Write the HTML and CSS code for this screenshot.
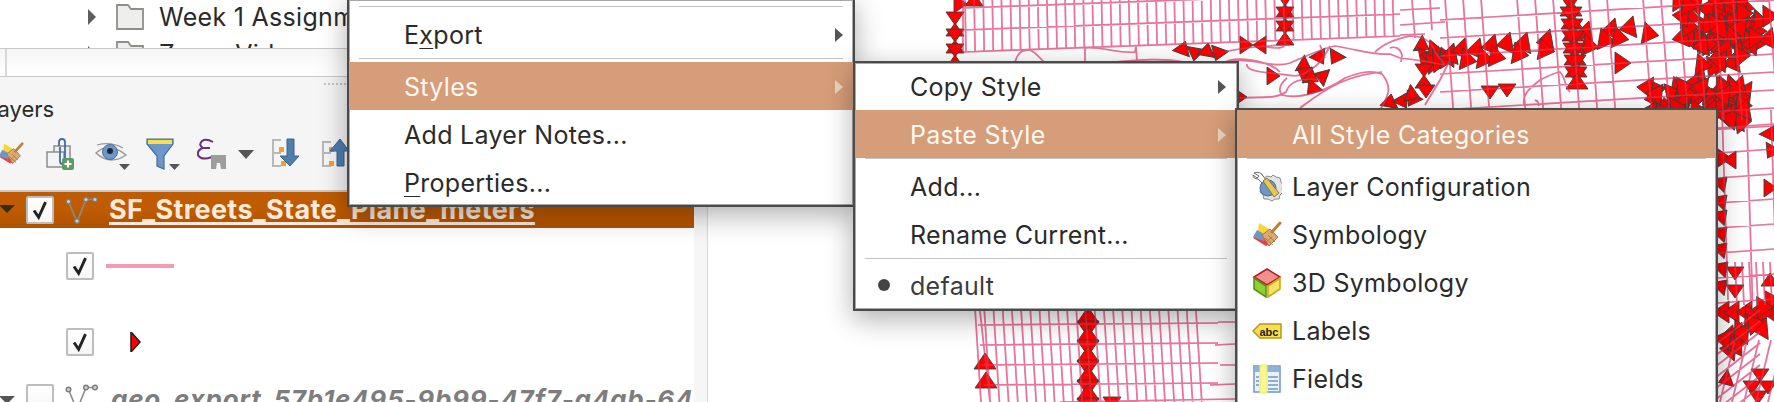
FILE: index.html
```html
<!DOCTYPE html>
<html lang="en">
<head>
<meta charset="utf-8">
<title>QGIS layer menu</title>
<link rel="stylesheet" href="styles.css">
</head>
<body>
<svg class="defs" width="0" height="0" aria-hidden="true">
  <symbol id="i-brush" viewBox="0 0 30 30">
    <path d="M1 18 8 12l10 12-4 2z" fill="#e8404a"/>
    <path d="M7 3l12 7-5 6-8-5z" fill="#f5d73c"/>
    <path d="M5 10l9 5-2 6-11-4z" fill="#6d97c9"/>
    <path d="M10 15l8-6 8 8-9 9z" fill="#dca873" stroke="#a9743f"/>
    <path d="M13 18l8 7M16 15l7 7M14 22l6-5" stroke="#a9743f" stroke-width=".8"/>
    <path d="M20 12l8-9" stroke="#bd7f38" stroke-width="3" stroke-linecap="round"/>
  </symbol>
  <symbol id="i-line" viewBox="0 0 34 28">
    <path d="M3.5 5.5 12 26 21 3.5h9" fill="none" stroke="#8c8c8c" stroke-width="1.6"/>
    <g fill="#cfcfcf" stroke="#7d7d7d" stroke-width="1.4">
      <circle cx="3.5" cy="5.500" r="2.300"/><circle cx="12" cy="25" r="2.300"/>
      <circle cx="21" cy="3.500" r="2.300"/><circle cx="30" cy="3.500" r="2.300"/>
    </g>
  </symbol>
  <symbol id="i-check" viewBox="0 0 24 24">
    <path d="M5.500 12.500 10.500 20 18 3.500" fill="none" stroke="#222" stroke-width="3.200"/>
  </symbol>
</svg>

<div class="app">
  <aside class="side">
    <div class="browser">
      <div class="browser-row">
        <span class="tree-arrow"></span>
        <svg class="folder" viewBox="0 0 28 26"><path d="M1 1h11l3 4h12v20H1z" fill="#eee" stroke="#8f8f8a" stroke-width="1.800"/></svg>
        <span class="browser-name">Week 1 Assignment</span>
      </div>
      <div class="browser-row">
        <span class="tree-arrow"></span>
        <svg class="folder" viewBox="0 0 28 26"><path d="M1 1h11l3 4h12v20H1z" fill="#eee" stroke="#8f8f8a" stroke-width="1.800"/></svg>
        <span class="browser-name">Zoom Videos</span>
      </div>
    </div>
    <div class="pathbar"><span class="pathbar-split"></span></div>
    <div class="layers-panel">
      <div class="grip"></div>
      <div class="layers-title">Layers</div>
      <div class="toolbar">
        <svg class="tool tool-brush"><use href="#i-brush"/></svg>
        <svg class="tool tool-add" viewBox="0 0 28 32">
          <path d="M8 8h16v17H8z" fill="#eee" stroke="#8d8d8d" stroke-width="1.500"/>
          <path d="M1 14h17v15H1z" fill="#f4f4f4" stroke="#8d8d8d" stroke-width="1.500"/>
          <path d="M13 8V4q0-3 3-3t3 3v19q0 3-2.500 3T14 23V9" fill="none" stroke="#3f6f9e" stroke-width="1.800"/>
          <rect x="16" y="20" width="12" height="12" rx="2" fill="#5c9a68"/>
          <path d="M22 22.500v7M18.500 26h7" stroke="#fff" stroke-width="2.200"/>
        </svg>
        <svg class="tool tool-eye" viewBox="0 0 36 32">
          <path d="M1 15Q14 3 31 17 15 28 1 15z" fill="#f2f2f2" stroke="#9a9a9a" stroke-width="1.500"/>
          <path d="M2 7q14-4 26 3" fill="none" stroke="#9a9a9a" stroke-width="1.200"/>
          <circle cx="15" cy="14" r="7.500" fill="#6d97c9" stroke="#4a6f9c"/>
          <circle cx="15" cy="13" r="3" fill="#1e2a3a"/>
          <path d="M24 26h11l-5.500 6z" fill="#555"/>
        </svg>
        <svg class="tool tool-filter" viewBox="0 0 36 32">
          <path d="M1 1h26v5l-9 12v13l-7-3V18L1 6z" fill="#6d97c9" stroke="#3f6f9e" stroke-width="1.200"/>
          <path d="M2 2h24v4H2z" fill="#f6e04b"/>
          <path d="M23 26h11l-5.500 6z" fill="#555"/>
        </svg>
        <svg class="tool tool-eps" viewBox="0 0 32 32">
          <path d="M16 4Q9 0 5 3 1 7 6 10q-6 2-5 7 3 6 14 2M6 10h7" fill="none" stroke="#6a2f7e" stroke-width="2"/>
          <path d="M14 17h15v14h-5l-1-6h-3l-1 6h-5z" fill="#9d9d9d"/>
        </svg>
        <span class="caret-down"></span>
        <svg class="tool tool-expand" viewBox="0 0 30 32">
          <path d="M2 2h9M3 2v27M3 15h8M2 28h9" stroke="#b8b8b8" stroke-width="2" fill="none"/>
          <path d="M9 9h5v5H9zM11 23h5v5h-5z" fill="#f6a21c"/>
          <path d="M17 1h7v17h5L20 28l-10-10h7z" fill="#4f7dac" stroke="#3a6390"/>
        </svg>
        <svg class="tool tool-collapse" viewBox="0 0 30 32">
          <path d="M2 4h9M3 4v25M3 15h8M2 28h9" stroke="#b8b8b8" stroke-width="2" fill="none"/>
          <path d="M9 9h5v5H9zM9 23h5v5H9z" fill="#f6a21c"/>
          <path d="M17 28h7V13h5L20 1 10 13h7z" fill="#4f7dac" stroke="#3a6390"/>
        </svg>
      </div>
    </div>
    <div class="layers-body">
      <div class="layer-tree">
        <div class="layer-row layer-row-selected">
          <span class="collapse"></span>
          <span class="check"><svg class="check-mark"><use href="#i-check"/></svg></span>
          <svg class="line-icon"><use href="#i-line"/></svg>
          <span class="layer-name">SF_Streets_State_Plane_meters</span>
        </div>
        <div class="legend-row">
          <span class="check"><svg class="check-mark"><use href="#i-check"/></svg></span>
          <span class="legend-line"></span>
        </div>
        <div class="legend-row">
          <span class="check"><svg class="check-mark"><use href="#i-check"/></svg></span>
          <svg class="legend-marker" viewBox="0 0 11 20"><path d="M1 0v20L10 10z" fill="#f00" stroke="#222" stroke-width="1.600"/></svg>
        </div>
        <div class="layer-row layer-row-off">
          <span class="collapse collapse-off"></span>
          <span class="check"></span>
          <svg class="line-icon"><use href="#i-line"/></svg>
          <span class="layer-name-off">geo_export_57b1e495-9b99-47f7-a4ab-64c9f0d1</span>
        </div>
      </div>
      <div class="scroll-track"></div>
    </div>
  </aside>
  <main class="map"><svg id="map" class="map-svg" viewBox="708 0 1066 402"></svg></main>

  <nav class="menu menu-layer">
    <div class="sep"></div>
    <div class="item">E<u>x</u>port<span class="arrow"></span></div>
    <div class="sep"></div>
    <div class="item item-on">Styles<span class="arrow"></span></div>
    <div class="item">Add Layer Notes...</div>
    <div class="item"><u>P</u>roperties...</div>
  </nav>

  <nav class="menu menu-styles">
    <div class="item">Copy Style<span class="arrow"></span></div>
    <div class="item item-on">Paste Style<span class="arrow"></span></div>
    <div class="sep"></div>
    <div class="item">Add...</div>
    <div class="item">Rename Current...</div>
    <div class="sep"></div>
    <div class="item item-current"><span class="bullet"></span>default</div>
  </nav>

  <nav class="menu menu-cats">
    <div class="item item-on">All Style Categories</div>
    <div class="sep"></div>
    <div class="item">
      <svg class="cat-icon" viewBox="0 0 30 30">
        <path d="M12 6l3-2 4 1 2-2 3 2 4 1 1 4 2 3-1 4 1 3-3 3-1 4-4 0-3 2-4-2-4 0-1-4-3-3 1-4z" fill="#e4e4e4" stroke="#8a8a8a"/>
        <circle cx="16" cy="16" r="8" fill="#6d97c9" stroke="#4a6f9c"/>
        <path d="M2 1Q9-1 11 4l3 4-4 3-4-4Q1 7 1 3l4 3 2-2z" fill="#fff" stroke="#666"/>
        <path d="M11 9l4-3 12 15-5 4z" fill="#e8c65a" stroke="#8a7430"/>
      </svg>Layer Configuration</div>
    <div class="item"><svg class="cat-icon"><use href="#i-brush"/></svg>Symbology</div>
    <div class="item">
      <svg class="cat-icon" viewBox="0 0 30 30">
        <path d="M15 1l13 8-13 8L2 9z" fill="#f58f8f" stroke="#b0202a" stroke-width="1.600"/>
        <path d="M2 10l12 8v11L2 21z" fill="#8fd12f" stroke="#5c8f1a" stroke-width="1.600"/>
        <path d="M28 10l-12 8v11l12-8z" fill="#f8e264" stroke="#c9a818" stroke-width="1.600"/>
      </svg>3D Symbology</div>
    <div class="item">
      <svg class="cat-icon" viewBox="0 0 30 30">
        <path d="M1 15l7-7h21v14H8z" fill="#f7df4e" stroke="#b79a12" stroke-width="1.500"/>
        <text class="abc" x="7.500" y="19.500">abc</text>
      </svg>Labels</div>
    <div class="item">
      <svg class="cat-icon" viewBox="0 0 30 30">
        <rect x="2" y="2" width="26" height="26" fill="#eaf2fb" stroke="#6d97c9" stroke-width="1.500"/>
        <path d="M3 3h24v5H3z" fill="#8fb2dc"/>
        <path d="M16 13h10M16 17h10M16 21h10M16 25h10M4 13h3M4 17h3M4 21h3" stroke="#6d97c9" stroke-width="1.300"/>
        <rect x="8" y="1" width="7" height="28" fill="#f8f59a" stroke="#eeee55"/>
      </svg>Fields</div>
  </nav>
</div>
<script src="map.js"></script>
</body>
</html>
```

FILE: styles.css
```css
* { box-sizing: border-box; }
html, body { margin: 0; padding: 0; background: #fff; }
body { font-family: Inter, "Noto Sans", "Liberation Sans", sans-serif; color: #2a2a2a; overflow: hidden; }
.defs { position: absolute; }
.app { position: relative; width: 1774px; height: 402px; overflow: hidden; display: grid; grid-template-columns: 708px 1fr; }

.side { display: flex; flex-direction: column; height: 402px; min-width: 0; overflow: hidden; }
.browser { height: 48px; overflow: hidden; background: #fff; }
.browser-row { height: 37px; display: flex; align-items: center; padding-left: 88px; position: relative; top: -2px; }
.tree-arrow { width: 0; height: 0; border-left: 8px solid #5e5e5e; border-top: 8px solid transparent; border-bottom: 8px solid transparent; }
.folder { width: 28px; height: 26px; margin-left: 20px; }
.browser-name { margin-left: 15px; font-size: 25px; letter-spacing: .3px; white-space: nowrap; }
.pathbar { height: 29px; border-top: 1px solid #c9c9c9; border-bottom: 1px solid #c9c9c9; background: linear-gradient(#f6f6f6, #fff); padding-left: 5px; }
.pathbar-split { display: block; width: 2px; height: 100%; background: #d8d8d8; }
.layers-panel { height: 115px; background: #f5f5f5; border-bottom: 2px solid #c8c8c8; overflow: hidden; }
.grip { width: 22px; margin: 6px 0 0 324px; border-top: 2px dotted #c4c4c4; height: 2px; }
.layers-title { margin: 10px 0 0 -15px; font-size: 22px; line-height: 28px; }
.toolbar { display: flex; align-items: flex-start; margin-top: 15px; }
.tool { display: block; height: 32px; flex: none; }
.tool-brush { width: 26px; margin-left: -2px; }
.tool-add { width: 28px; margin-left: 22px; }
.tool-eye { width: 36px; margin-left: 21px; }
.tool-filter { width: 36px; margin-left: 15px; }
.tool-eps { width: 32px; margin-left: 15px; }
.caret-down { width: 0; height: 0; margin: 12px 0 0 9px; border-top: 9px solid #555; border-left: 8px solid transparent; border-right: 8px solid transparent; }
.tool-expand { width: 30px; margin-left: 16px; }
.tool-collapse { width: 30px; margin-left: 20px; }

.layers-body { flex: 1; display: flex; background: #fff; min-height: 0; }
.layer-tree { width: 694px; overflow: hidden; }
.scroll-track { width: 14px; background: #f6f6f6; border-right: 1px solid #d9d9d9; }
.layer-row { height: 36px; display: flex; align-items: center; white-space: nowrap; }
.layer-row-selected { background: linear-gradient(#bf5b00 50%, #b05200); }
.layer-row-off { margin-top: 4px; align-items: flex-start; }
.collapse { width: 0; height: 0; margin-left: -1px; border-top: 8px solid #3a2a1a; border-left: 8px solid transparent; border-right: 8px solid transparent; position: relative; top: -1px; }
.collapse-off { top: 12px; border-top-color: #555; }
.check { width: 28px; height: 28px; flex: none; background: linear-gradient(#fff, #f6f6f6); border: 2px solid #bdbdbd; border-radius: 2px; display: flex; align-items: center; justify-content: center; }
.layer-row .check { margin-left: 11px; }
.check-mark { width: 22px; height: 22px; }
.line-icon { width: 34px; height: 28px; margin-left: 11px; flex: none; }
.layer-name { margin-left: 10px; font-size: 27px; line-height: 36px; font-weight: 700; color: #fbeadb; letter-spacing: .35px; text-decoration: underline; text-decoration-thickness: 3px; text-underline-offset: 3px; }
.layer-name-off { margin-left: 12px; font-size: 26px; font-weight: 700; font-style: italic; color: #7d7d7d; line-height: 32px; letter-spacing: .75px; }
.legend-row { height: 76px; display: flex; align-items: center; padding-left: 66px; }
.legend-line { width: 68px; height: 4px; background: #f29cb4; margin-left: 12px; }
.legend-marker { width: 11px; height: 20px; margin-left: 36px; }

.map { min-width: 0; background: #fff; }
.map-svg { display: block; width: 1066px; height: 402px; filter: blur(.35px); }

.menu { position: absolute; background: #fff; border: 2px solid #4a4a4a; box-shadow: inset 0 0 0 1px #a8a8a8, 0 8px 26px rgba(0,0,0,.32); font-size: 25px; letter-spacing: .3px; color: #2a2a2a; }
.menu-layer { left: 347px; top: -2px; width: 508px; height: 209px; padding-top: 6px; z-index: 1; }
.menu-styles { left: 853px; top: 61px; width: 386px; height: 250px; z-index: 2; }
.menu-cats { left: 1235px; top: 108px; width: 483px; height: 310px; z-index: 3; }
.item { height: 48px; display: flex; align-items: center; padding: 1px 10px 0 55px; white-space: nowrap; position: relative; }
.menu-styles .item { padding-right: 11px; }
.menu-styles .item:first-child { height: 47px; }
.menu-cats .item { padding-left: 15px; }
.menu-cats .item-on { padding-left: 55px; }
.item-on { background: #d59d79; color: #fff8f0; }
.item u { text-decoration-thickness: 1px; text-underline-offset: 4px; }
.arrow { margin-left: auto; width: 0; height: 0; border-left: 8px solid #555; border-top: 7px solid transparent; border-bottom: 7px solid transparent; }
.item-on .arrow { border-left-color: #ecd3c3; }
.sep { height: 1px; margin: 0 10px 3px; background: #c4c4c4; }
.bullet { position: absolute; left: 23px; top: 17px; width: 12px; height: 12px; border-radius: 50%; background: #444; }
.item-current { height: 47px; color: #3c3c3c; }
.cat-icon { width: 30px; height: 30px; margin-right: 10px; flex: none; }
.abc { font-family: "Liberation Sans", sans-serif; font-size: 11px; font-weight: 700; letter-spacing: 0; fill: #222; }
```

FILE: map.js
```js
(function () {
  var NS = 'http://www.w3.org/2000/svg';
  var svg = document.getElementById('map');
  var seed = 11;
  function rnd() { seed = (seed * 16807) % 2147483647; return seed / 2147483647; }
  function el(name, attrs, parent) {
    var n = document.createElementNS(NS, name);
    for (var k in attrs) n.setAttribute(k, attrs[k]);
    (parent || svg).appendChild(n);
    return n;
  }
  var roads = '';
  function L(a, b, c, d) { roads += 'M' + a.toFixed(1) + ' ' + b.toFixed(1) + 'L' + c.toFixed(1) + ' ' + d.toFixed(1); }

  // North-west grid
  [8, 30, 52].forEach(function (y) { L(963, y, 1400, y - 16); });
  for (var x = 965; x < 1400; x += 9.1) L(x, -2, x + 1, 52 - 0.037 * (x - 963));
  L(963, 0, 963, 52);
  // Upper-right city grid
  for (var i = 0; i < 22; i++) {
    var vx = 1445 + i * 18;
    if (i % 7 !== 3) L(vx, -2, vx + 9, 120);
  }
  for (var j = 0; j < 8; j++) {
    var hy = 12 + j * 18;
    L(1440, hy + 8, 1774, hy - 12);
  }
  L(1400, 10, 1440, 8); L(1400, 25, 1445, 22); L(1412, 0, 1415, 38); L(1430, 0, 1432, 30); L(1400, 35, 1425, 34);
  // East strip
  for (var a = 0; a < 3; a++) L(1722 + a * 24.5, 110, 1728 + a * 24.5, 300);
  for (var b = 0; b < 8; b++) L(1718, 128 + b * 25, 1774, 124 + b * 25);
  for (var c = 0; c < 6; c++) L(1735 + c * 7, 262, 1737 + c * 7, 305);
  for (var d = 0; d < 9; d++) L(1715, 345 + d * 11, 1760, 310 + d * 11);
  for (var e = 0; e < 5; e++) L(1720 + e * 12, 402, 1735 + e * 12, 340);
  // South grid
  [325, 345, 365, 385].forEach(function (y, n) { L(978 + n * 2, y, 1218, y - 2); });
  L(1218, 322, 1235, 322); L(1215, 345, 1235, 344); L(1220, 365, 1235, 365); L(1210, 385, 1235, 384);
  for (var s = 0; s < 25; s++) L(975 + s * 9.2, 308, 981 + s * 9.2, 402);
  L(980, 311, 990, 402);
  L(1060, 402, 1235, 399);
  var curves = [
    'M1284 40C1288 48 1280 50 1262 46',
    'M1232 60C1260 60 1275 68 1290 63C1310 55 1322 48 1335 46C1360 50 1370 55 1390 54L1400 58C1420 60 1430 62 1445 65',
    'M1375 52C1385 42 1400 38 1410 36C1425 36 1432 42 1435 52L1445 65',
    'M1390 48C1395 46 1400 48 1402 55L1401 62',
    'M1247 64C1246 70 1256 72 1280 74C1292 76 1300 78 1310 70C1320 65 1328 50 1330 46',
    'M1240 98C1260 96 1275 100 1286 92C1290 80 1305 78 1320 80',
    'M1287 78C1280 84 1278 90 1282 95C1300 100 1328 90 1345 78C1360 72 1370 70 1382 74C1395 90 1385 100 1380 110',
    'M1300 108C1330 85 1350 75 1382 72',
    'M1320 45L1325 58M1450 60L1440 80L1425 105',
    'M1015 62C1018 52 1022 50 1030 50C1035 52 1040 58 1044 62',
    'M1085 47L1085 62M1085 48C1100 46 1120 54 1135 52L1136 46L1137 62',
    'M1115 62C1140 60 1160 58 1185 62',
    'M1225 52C1240 48 1270 45 1290 45M1225 62C1240 55 1270 62 1280 72',
    'M1524 105C1522 94 1530 88 1540 80C1548 76 1556 72 1560 72C1566 78 1564 86 1570 92M1537 100L1539 106M1538 102L1535 100'
  ].join('');
  el('path', { id: 'roads', d: roads + curves, fill: 'none', stroke: '#e8759a', 'stroke-width': 1.7 });

  var tris = el('g', { fill: '#f00', stroke: '#3d3d3d', 'stroke-width': 0.9 });
  function T(x, y, r, big) {
    el('path', { d: big ? 'M-7 -11L9 0L-7 11Z' : 'M-6 -9L7 0L-6 9Z', transform: 'translate(' + x + ' ' + y + ') rotate(' + (r || 0) + ')' }, tris);
  }
  function bowV(x, y) { T(x, y - 6, 90); T(x, y + 6, -90); }
  function bowH(x, y) { T(x - 7, y, 0); T(x + 7, y, 180); }
  function diamond(x, y) { T(x, y - 6, -90, true); T(x, y + 6, 90, true); }
  function fill(x0, y0, x1, y1, n) {
    for (var i = 0; i < n; i++) T(x0 + rnd() * (x1 - x0), y0 + rnd() * (y1 - y0), (rnd() < 0.5 ? 0 : 180) + rnd() * 24 - 12, true);
  }

  // West and centre columns
  T(960, 4, 0); T(974, 0, -90);
  bowV(955, 24); bowV(955, 41); bowV(955, 56);
  [5, 19, 33].forEach(function (y) { bowV(1285, y); });
  [322, 341, 361, 381, 399].forEach(function (y) { diamond(1088, y); });
  T(985, 362, -90, true); T(986, 381, -90, true); T(1112, 403, 90);
  // Park
  T(1183, 48, -70); T(1195, 54, 100); T(1207, 50, -80); T(1218, 54, 110);
  bowH(1253, 45); T(1273, 76, 0);
  [[1320, 58, 60], [1335, 58, 120], [1305, 66, 30], [1303, 72, 210], [1312, 78, 30], [1321, 76, 200], [1312, 89, 130]].forEach(function (t) { T(t[0], t[1], t[2]); });
  T(1240, 97, 0); T(1390, 101, -80); T(1403, 102, 60); T(1412, 100, 120); T(1413, 95, 20);
  // Cluster east of park
  T(1423, 46, 30);
  fill(1427, 50, 1450, 66, 10);
  bowV(1424, 76); T(1426, 91, 90);
  // Pair row
  [[1460, 50], [1475, 50], [1490, 46], [1505, 44], [1522, 44], [1545, 41], [1584, 33], [1610, 30], [1628, 28]].forEach(function (p) { T(p[0], p[1], 170, true); });
  [[1468, 60], [1485, 59], [1497, 57], [1520, 54], [1546, 50], [1590, 46], [1606, 40], [1620, 38], [1650, 34]].forEach(function (p) { T(p[0], p[1], 10, true); });
  T(1490, 92, 90); T(1507, 90, 90);
  // Column at 1570
  [5, 18, 30, 42, 54, 66, 78].forEach(function (y, n) { T(1570 + n, y - 4, 90, true); T(1571 + n, y + 4, -90, true); });
  T(1622, 63, 0, true);
  // Dense north-east
  fill(1680, 0, 1752, 48, 62);
  fill(1735, 12, 1772, 45, 9);
  fill(1700, 48, 1745, 68, 8);
  fill(1645, 85, 1745, 112, 46);
  fill(1720, 105, 1745, 132, 9);
  fill(1680, 74, 1700, 95, 6);
  // East strip
  T(1724, 158, 0); T(1730, 160, 180);
  [182, 200, 215, 232, 248].forEach(function (y) { T(1722, y, -45); });
  T(1723, 267, -45); T(1735, 273, 90); T(1722, 285, -45); T(1735, 291, 90);
  T(1770, 135, 60); T(1771, 152, 120); T(1770, 188, 0); T(1770, 280, -90);
  [1722, 1732, 1745, 1757, 1770].forEach(function (x) { T(x, 312, 180, true); });
  fill(1722, 320, 1748, 350, 9);
  fill(1740, 300, 1774, 330, 6);
  T(1725, 380, 160); T(1760, 375, 90); T(1752, 387, 90); T(1768, 387, 90); T(1758, 397, 90);

  el('use', { href: '#roads', opacity: 0.3 });
})();
```
